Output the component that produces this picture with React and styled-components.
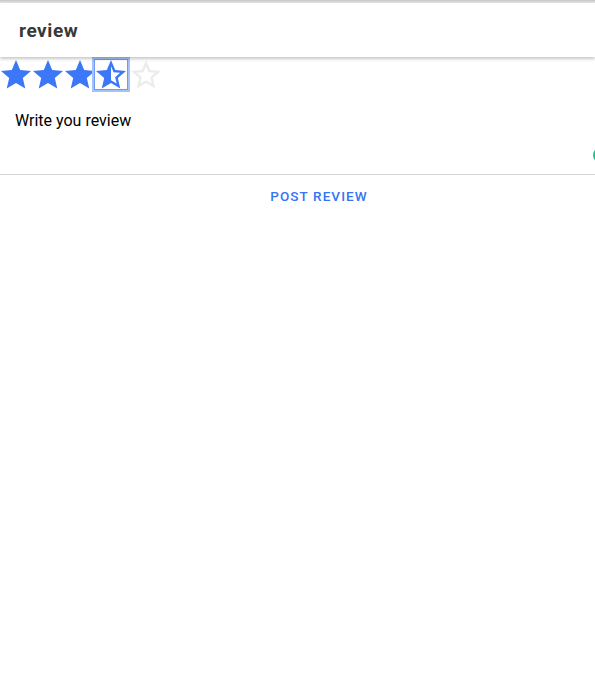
import React, { useState } from 'react';
import styled, { createGlobalStyle } from 'styled-components';

const GlobalStyle = createGlobalStyle`
  body {
    margin: 0;
    background: #ffffff;
    font-family: Roboto, "Liberation Sans", sans-serif;
  }
`;

const Page = styled.div`
  width: 595px;
  min-height: 683px;
  overflow: hidden;
  background: #fff;
`;

const TopEdge = styled.div`
  height: 3px;
  background: linear-gradient(#c4c4c8, #e8e8ea);
`;

const Header = styled.header`
  position: relative;
  z-index: 1;
  height: 54px;
  display: flex;
  align-items: center;
  padding: 0 19px;
  background: #fff;
  box-shadow: 0 2px 3px rgba(0, 0, 0, 0.22);
`;

const HeaderTitle = styled.h1`
  margin: 0;
  font-size: 19px;
  font-weight: 700;
  color: #383838;
  letter-spacing: 0.6px;
`;

const Stars = styled.div`
  display: flex;
  align-items: center;
  height: 35px;
`;

const StarButton = styled.button`
  display: flex;
  align-items: center;
  justify-content: center;
  width: ${(p) => (p.$focused ? '38px' : '32px')};
  height: 35px;
  margin: ${(p) => (p.$focused ? '0 0 0 -4px' : '0')};
  padding: 0;
  border: ${(p) => (p.$focused ? '2px solid #a6c3f9' : 'none')};
  box-shadow: ${(p) => (p.$focused ? 'inset 0 0 0 1px #6d9af4' : 'none')};
  background: transparent;
  cursor: pointer;
`;

const Form = styled.div`
  position: relative;
  height: 82px;
`;

const ReviewInput = styled.textarea`
  display: block;
  width: 100%;
  height: 100%;
  box-sizing: border-box;
  padding: 20px 15px 0;
  border: none;
  resize: none;
  font-family: Roboto, "Liberation Sans", sans-serif;
  font-size: 16px;
  line-height: 18px;
  color: #000;
  outline: none;
  &::placeholder {
    color: #000;
  }
`;

const Grip = styled.span`
  position: absolute;
  right: -14px;
  top: 55px;
  width: 16px;
  height: 16px;
  border-radius: 50%;
  background: #1fbf8c;
`;

const Divider = styled.hr`
  margin: 0;
  border: none;
  border-top: 1px solid #d6d6d6;
`;

const Actions = styled.div`
  display: flex;
  justify-content: center;
  padding: 13px 0 0 43px;
`;

const PostButton = styled.button`
  border: none;
  background: transparent;
  padding: 0;
  font-family: Roboto, "Liberation Sans", sans-serif;
  font-size: 13.5px;
  line-height: 16px;
  font-weight: 500;
  letter-spacing: 1.1px;
  color: #3574f3;
  cursor: pointer;
`;

const FULL = 'M12 17.27L18.18 21l-1.64-7.03L22 9.24l-7.19-.61L12 2 9.19 8.63 2 9.24l5.46 4.73L5.82 21z';
const HALF =
  'M22 9.24l-7.19-.62L12 2 9.19 8.63 2 9.24l5.46 4.73L5.82 21 12 17.27 18.18 21l-1.63-7.03L22 9.24zM12 15.4V6.1l1.71 4.04 4.38.38-3.32 2.88 1 4.28L12 15.4z';
const EMPTY =
  'M22 9.24l-7.19-.62L12 2 9.19 8.63 2 9.24l5.46 4.73L5.82 21 12 17.27 18.18 21l-1.63-7.03L22 9.24zM12 15.4l-3.76 2.27 1-4.28-3.32-2.88 4.38-.38L12 6.1l1.71 4.05 4.38.38-3.32 2.88 1 4.28L12 15.4z';

const Star = ({ kind }) => (
  <svg width="30" height="29" viewBox="2 2 20 19.3">
    <path d={kind === 'full' ? FULL : kind === 'half' ? HALF : EMPTY} fill={kind === 'empty' ? '#ececec' : '#3b77f6'} />
  </svg>
);

const App = () => {
  const [rating] = useState(3.5);
  const kinds = [1, 2, 3, 4, 5].map((n) => (rating >= n ? 'full' : rating >= n - 0.5 ? 'half' : 'empty'));

  return (
    <Page>
      <GlobalStyle />
      <TopEdge />
      <Header>
        <HeaderTitle>review</HeaderTitle>
      </Header>
      <Stars>
        {kinds.map((kind, i) => (
          <StarButton key={i} $focused={i === 3}>
            <Star kind={kind} />
          </StarButton>
        ))}
      </Stars>
      <Form>
        <ReviewInput placeholder="Write you review" />
        <Grip />
      </Form>
      <Divider />
      <Actions>
        <PostButton>POST REVIEW</PostButton>
      </Actions>
    </Page>
  );
};

export default App;
